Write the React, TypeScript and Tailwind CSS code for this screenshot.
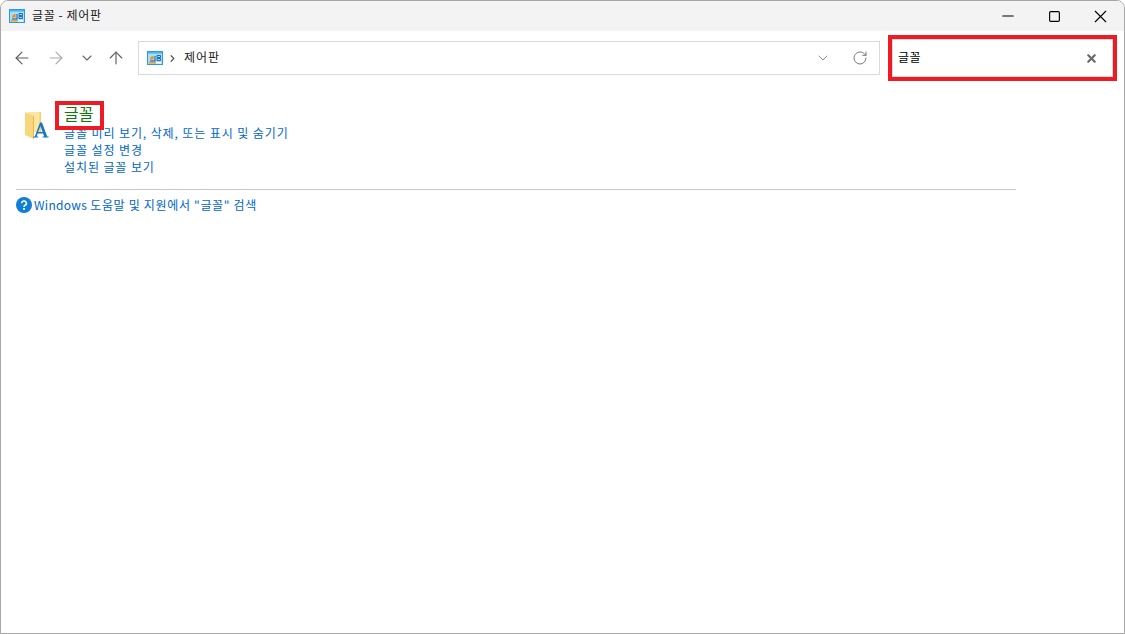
import { ArrowLeft, ArrowRight, ArrowUp, ChevronDown, ChevronRight, Minus, RotateCw, Square, X } from 'lucide-react';

const font = { fontFamily: '"Noto Sans CJK KR", "Liberation Sans", sans-serif' };

function CplIcon({ className }: { className?: string }) {
  return (
    <svg className={className} viewBox="0 0 16 14" width="16" height="14">
      <rect x="0.5" y="0.5" width="15" height="13" fill="#a9dcf7" stroke="#2a9be0" />
      <rect x="1" y="1" width="14" height="1.6" fill="#4fb4ec" />
      <path d="M3 8.5 a3.5 3.5 0 0 1 3.5-3.5 v3.5z" fill="#ee8f22" />
      <path d="M3 9.5 h4.5 v-4.5 h1 v5.5 h-5.5z" fill="#16619f" />
      <path d="M10 4.5 h3.5 v2 h-3.5z M10 7.5 h3.5 v2 h-3.5z" fill="none" stroke="#1d6fb2" />
      <rect x="2" y="11" width="7" height="1.5" fill="#f2a02e" />
      <rect x="9" y="11" width="5" height="1.5" fill="#ffffff" />
    </svg>
  );
}

function FontFolderIcon() {
  return (
    <svg viewBox="0 0 26 28" width="26" height="28">
      <path d="M4 1 H17 V21 H4z" fill="#fde6a0" />
      <path d="M15.5 1 H17 V21 H15.5z" fill="#f5cf6e" />
      <path d="M1 1 L10 5 V28 L1 24z" fill="#f8d67c" />
      <path d="M9 5 L10 5 V28 L9 27.5z" fill="#e8b94f" />
      <path
        d="M9 26.5 h5.2 v-1 h-1.6 l1.1-3 h5.4 l1.1 3 h-1.6 v1 h6 v-1 h-1.4 l-5.2-14 h-2 l-5.2 14 h-1.2z M14.2 21 l2.2-6 2.2 6z"
        fill="#1777c4"
        fillRule="evenodd"
      />
    </svg>
  );
}

function HelpIcon() {
  return (
    <svg viewBox="0 0 16 16" width="16" height="16">
      <circle cx="8" cy="8" r="8" fill="#0f7fd6" />
      <path d="M5.6 6.2 a2.4 2.2 0 1 1 3.6 1.9 c-.8.5-1.2.9-1.2 1.8" fill="none" stroke="#fff" strokeWidth="1.6" />
      <rect x="7.1" y="11" width="1.8" height="1.8" fill="#fff" />
    </svg>
  );
}

const links = ['글꼴 미리 보기, 삭제, 또는 표시 및 숨기기', '글꼴 설정 변경', '설치된 글꼴 보기'];

export default function App() {
  return (
    <div
      className="w-[1125px] h-[634px] bg-white border border-[#a8a8a8] rounded-t-lg overflow-hidden flex flex-col text-xs text-[#1a1a1a]"
      style={font}
    >
      {/* title bar */}
      <div className="h-[30px] shrink-0 bg-[#f3f3f3] flex items-center pl-[8px]">
        <CplIcon />
        <span className="ml-[7px] mb-[2px] flex-1 tracking-[0.6px]">글꼴 - 제어판</span>
        <div className="flex items-center pr-[1px]">
          <div className="w-[46px] flex justify-center"><Minus size={18} strokeWidth={1.5} className="text-black" /></div>
          <div className="w-[46px] flex justify-center"><Square size={13} strokeWidth={2.1} className="text-black" /></div>
          <div className="w-[46px] flex justify-center"><X size={21} strokeWidth={1.3} className="text-black" /></div>
        </div>
      </div>

      {/* nav row */}
      <div className="h-[54px] shrink-0 flex items-center pl-[11px] pr-[6px]">
        <ArrowLeft size={20} strokeWidth={1.4} className="text-[#5f5f5f]" />
        <ArrowRight size={20} strokeWidth={1.4} className="ml-[14px] text-[#aaaaaa]" />
        <ChevronDown size={16} strokeWidth={1.7} className="ml-[13px] text-[#666666]" />
        <ArrowUp size={20} strokeWidth={1.4} className="ml-[11px] text-[#5f5f5f]" />
        <div className="ml-[12px] w-[742px] h-[34px] border border-[#d9d9d9] flex items-center pl-[8px] pr-[11px]">
          <CplIcon />
          <ChevronRight size={11} strokeWidth={2.6} className="ml-[4px] text-[#555555]" />
          <span className="ml-[6px] mb-[2px] flex-1 tracking-[1px]">제어판</span>
          <ChevronDown size={16} strokeWidth={1.2} className="text-[#707070]" />
          <RotateCw size={16} strokeWidth={1.5} className="ml-[21px] text-[#7a7a7a]" />
        </div>
        <div className="ml-[8px] w-[229px] h-[46px] border-[4px] border-[#ed1c24]">
          <div className="h-full border border-[#d9d9d9] flex items-center pl-[5px] pr-[14px] justify-between">
            <span className="text-black tracking-[0.5px] mb-[2px]">글꼴</span>
            <X size={13} strokeWidth={4} className="text-[#6a6a6a]" />
          </div>
        </div>
      </div>

      {/* results */}
      <div className="flex-1 pl-[15px] pt-[17px]">
        <div className="relative flex pl-[8px]">
          <div className="pt-[9px]"><FontFolderIcon /></div>
          <div className="ml-[14px] flex flex-col text-[#0066cc]">
            <span className="text-[16px] leading-[22px] text-[#0a7a0a]">글꼴</span>
            {links.map((l) => (
              <span key={l} className="leading-[17px] tracking-[0.9px]">{l}</span>
            ))}
          </div>
          <div className="absolute left-[39px] top-[-1px] w-[49px] h-[29px] border-[4px] border-[#ed1c24]" />
        </div>
        <div className="mt-[14px] w-[1000px] border-t border-[#c8c8c8]" />
        <div className="mt-[7px] flex items-center text-[#0066cc]">
          <HelpIcon />
          <span className="ml-[2px] tracking-[0.3px]">Windows <span className="tracking-[0.68px]">도움말 및 지원에서 "글꼴" 검색</span></span>
        </div>
      </div>
    </div>
  );
}
